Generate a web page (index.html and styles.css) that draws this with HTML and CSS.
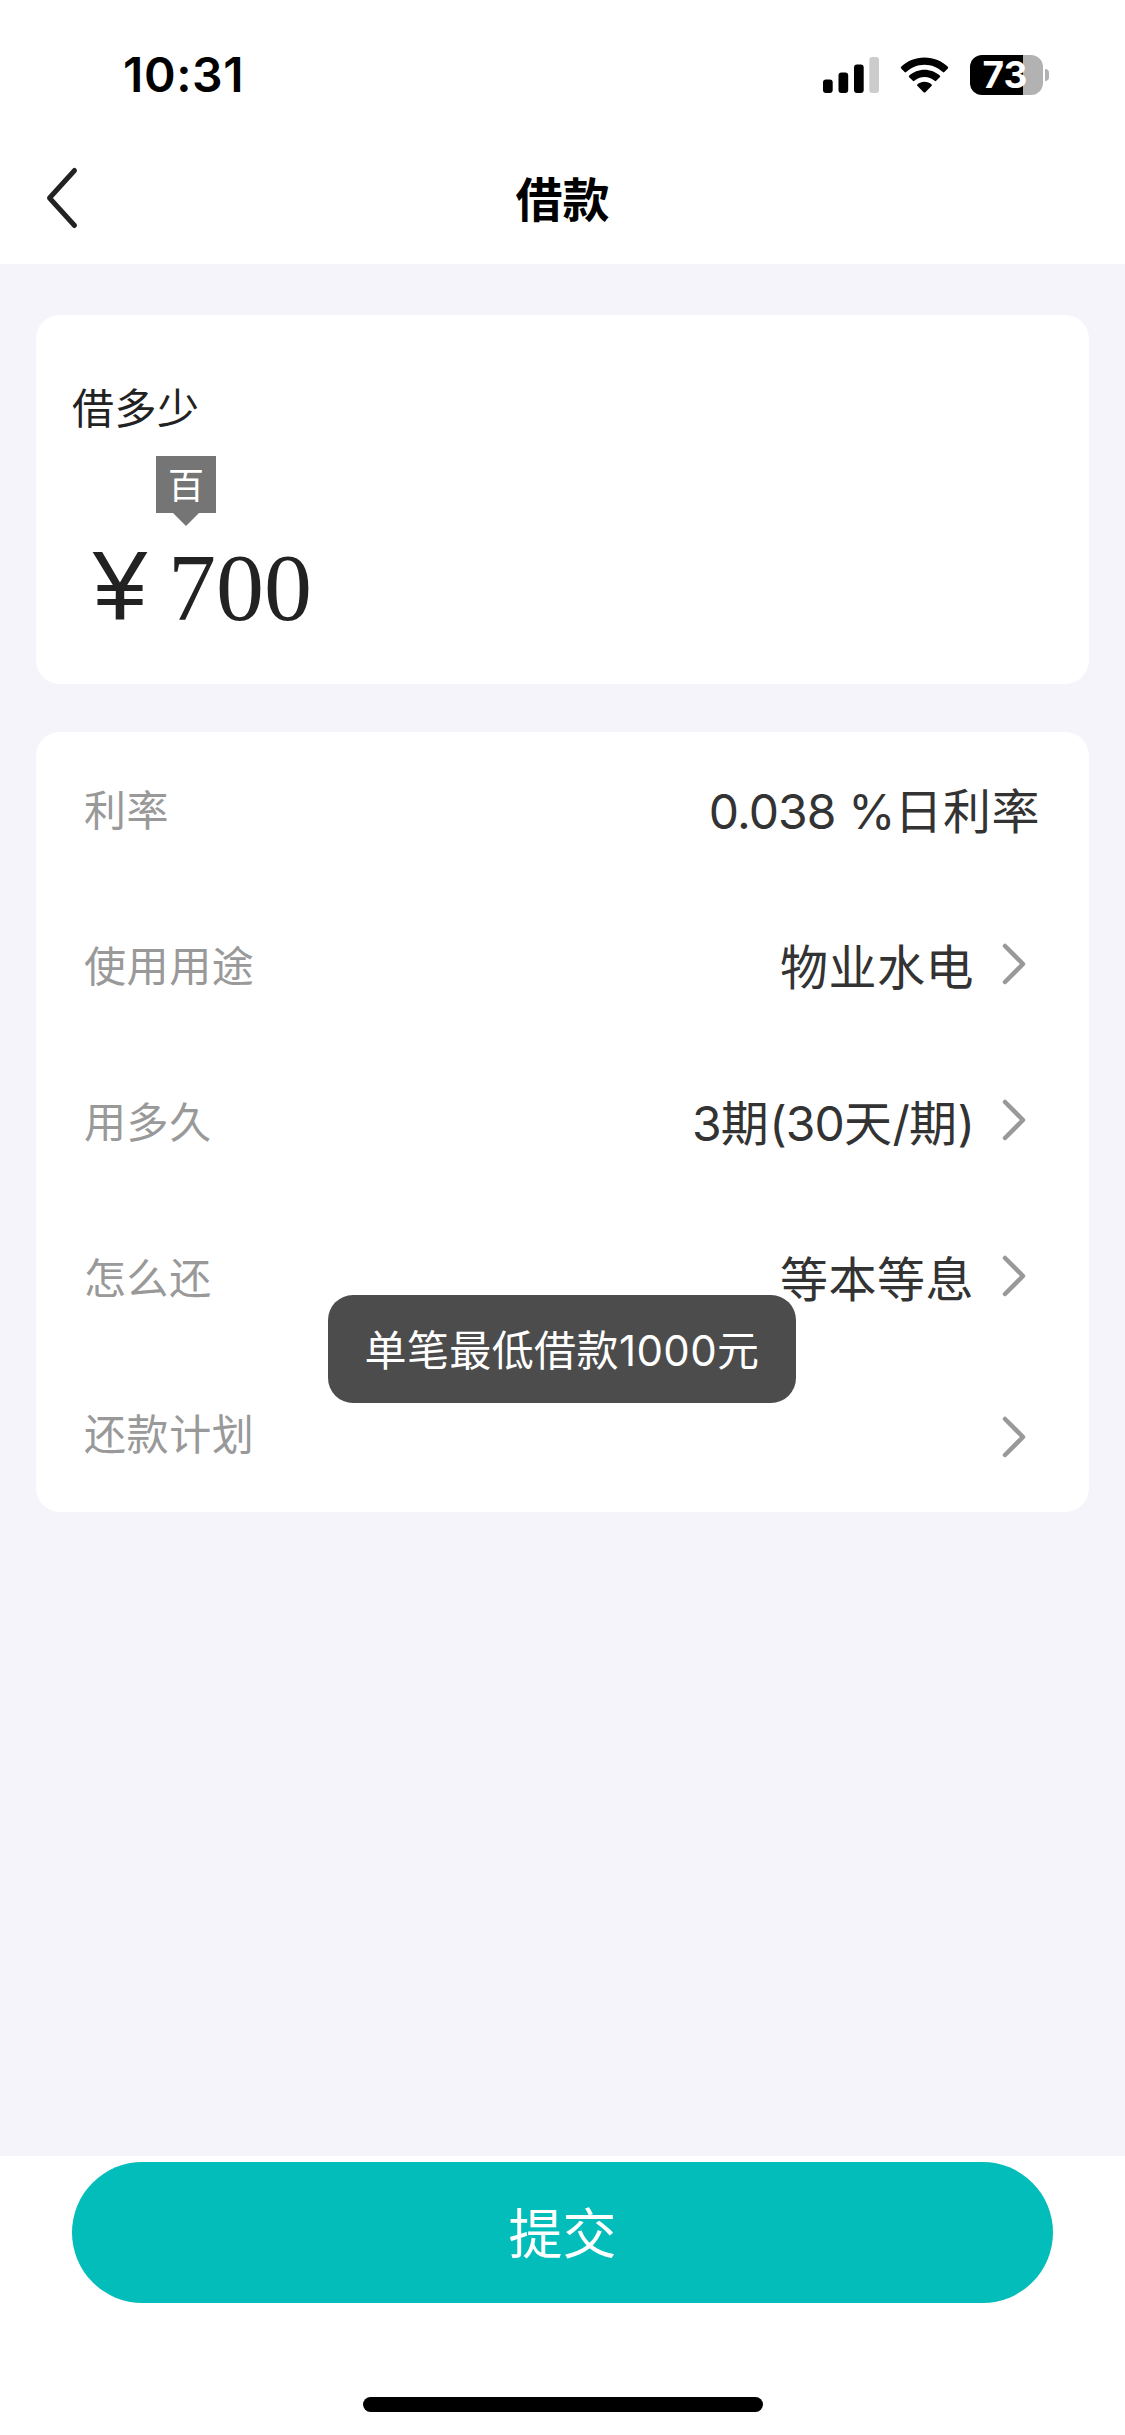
FILE: index.html
```html
<!DOCTYPE html>
<html lang="zh-CN">
<head>
<meta charset="utf-8">
<title>借款</title>
<link rel="stylesheet" href="styles.css">
</head>
<body>
<div class="screen">
  <header class="top">
    <div class="status">
      <span class="time">10:31</span>
      <div class="status-icons">
        <svg class="signal" width="56" height="36" viewBox="0 0 56 36">
          <rect x="0" y="22.500" width="9.700" height="13.500" rx="3"/>
          <rect x="15.500" y="15.500" width="9.700" height="20.500" rx="3"/>
          <rect x="31" y="7.500" width="9.700" height="28.500" rx="3"/>
          <rect x="46.300" y="0" width="9.700" height="36" rx="3" fill="#ccc"/>
        </svg>
        <svg class="wifi" width="49" height="36" viewBox="0 0 50 37">
          <path d="M25 0.5C34.5 .5 43 4.200 49 10.100Q49.800 11 49 11.900L45.400 15.500Q44.600 16.200 43.800 15.500C38.800 10.800 32.200 8 25 8S11.200 10.800 6.200 15.500Q5.400 16.200 4.600 15.500L1 11.900Q.2 11 1 10.100C7 4.200 15.500 .5 25 .5Z"/>
          <path d="M25 13C31 13 36.600 15.300 40.700 19.100Q41.600 20 40.700 20.900L37 24.500Q36.200 25.200 35.400 24.500C32.600 22 29 20.500 25 20.500S17.400 22 14.600 24.500Q13.800 25.200 13 24.500L9.300 20.900Q8.400 20 9.300 19.100C13.400 15.300 19 13 25 13Z"/>
          <path d="M25 25.500C27.800 25.500 30.300 26.500 32.200 28.100Q33.100 29 32.200 29.900L25.900 36.200Q25 37 24.100 36.200L17.800 29.900Q16.900 29 17.800 28.100C19.700 26.500 22.200 25.500 25 25.500Z"/>
        </svg>
        <div class="battery">
          <div class="battery-body">73</div>
          <div class="battery-cap"></div>
        </div>
      </div>
    </div>
    <nav class="nav">
      <svg class="back" width="36" height="66" viewBox="0 0 36 66"><path d="M30.500 5.500L5.500 33L30.500 60.500" fill="none" stroke="#222" stroke-width="5" stroke-linecap="round" stroke-linejoin="round"/></svg>
      <h1 class="title">借款</h1>
    </nav>
  </header>

  <main class="content">
    <section class="card amount-card">
      <div class="amount-label">借多少</div>
      <div class="amount"><span class="yen">¥</span><span class="digits">700<span class="unit">百</span></span></div>
    </section>

    <section class="card list">
      <div class="row">
        <span class="label">利率</span>
        <span class="value plain"><span class="num">0.038 %</span>日利率</span>
      </div>
      <div class="row">
        <span class="label">使用用途</span>
        <span class="value">物业水电</span>
        <svg class="arrow" width="28" height="46" viewBox="0 0 28 46"><path d="M5 5L23 23L5 41"/></svg>
      </div>
      <div class="row">
        <span class="label">用多久</span>
        <span class="value"><span class="num">3</span>期<span class="num">(30</span>天<span class="num">/</span>期<span class="num">)</span></span>
        <svg class="arrow" width="28" height="46" viewBox="0 0 28 46"><path d="M5 5L23 23L5 41"/></svg>
      </div>
      <div class="row">
        <span class="label">怎么还</span>
        <span class="value">等本等息</span>
        <svg class="arrow" width="28" height="46" viewBox="0 0 28 46"><path d="M5 5L23 23L5 41"/></svg>
      </div>
      <div class="row">
        <span class="label">还款计划</span>
        <svg class="arrow low" width="28" height="46" viewBox="0 0 28 46"><path d="M5 5L23 23L5 41"/></svg>
      </div>
    </section>
  </main>

  <footer class="bottom">
    <button class="submit" type="button">提交</button>
    <div class="home-bar"></div>
  </footer>

  <div class="toast">单笔最低借款<span class="toast-num">1000</span>元</div>
</div>
</body>
</html>
```
FILE: styles.css
```css
* { box-sizing: border-box; }

body {
  margin: 0;
  font-family: "Noto Sans CJK SC", sans-serif;
  background: #fff;
}

.screen {
  position: relative;
  display: flex;
  flex-direction: column;
  width: 1125px;
  height: 2435px;
  overflow: hidden;
}

.top { height: 264px; background: #fff; }

.status {
  display: flex;
  align-items: center;
  justify-content: space-between;
  height: 132px;
  padding: 17px 76px 0 123px;
}

.time {
  font: 600 48px/60px Inter, sans-serif;
  letter-spacing: .6px;
  color: #000;
}

.status-icons { display: flex; align-items: center; }
.wifi { margin-left: 21px; }

.battery { display: flex; align-items: center; margin-left: 21px; }
.battery-body {
  width: 73px;
  height: 40px;
  border-radius: 12px;
  background: linear-gradient(90deg, #000 53px, #b2b2b2 53px);
  color: #fff;
  font: 700 37px/40px Inter, sans-serif;
  text-align: center;
  text-indent: -3px;
}
.battery-cap {
  width: 4px;
  height: 12px;
  margin-left: 2px;
  border-radius: 0 4px 4px 0;
  background: #b2b2b2;
}

.nav {
  display: grid;
  grid-template-columns: 200px 1fr 200px;
  align-items: center;
  height: 132px;
}
.back { margin-left: 44px; }
.title {
  margin: 0;
  padding-bottom: 3px;
  font-size: 47px;
  line-height: 69px;
  font-weight: 700;
  text-align: center;
  color: #000;
}

.content {
  display: flex;
  flex-direction: column;
  gap: 48px;
  height: 1892px;
  padding: 51px 36px 0;
  background: #f4f4fa;
}

.card { border-radius: 24px; background: #fff; }

.amount-card { height: 369px; padding: 58px 36px 0; }
.amount-label {
  font-size: 42px;
  line-height: 66px;
  letter-spacing: .5px;
  color: #222;
}
.amount {
  display: flex;
  align-items: baseline;
  margin-top: 72px;
  font-size: 96px;
  line-height: 150px;
  color: #222;
}
.yen {
  width: 96px;
  font-family: "Liberation Sans", sans-serif;
  font-size: 98px;
  text-align: center;
}
.digits { position: relative; font-family: "Liberation Serif", serif; }

.unit {
  position: absolute;
  left: -12px;
  top: -57px;
  width: 60px;
  height: 57px;
  background: #757575;
  color: #fff;
  font: 36px/54px "Noto Sans CJK SC", sans-serif;
  text-align: center;
}
.unit::after {
  content: "";
  position: absolute;
  left: 16px;
  top: 56px;
  border: 14px solid transparent;
  border-top-color: #757575;
  border-bottom: 0;
}

.row {
  display: flex;
  align-items: center;
  height: 156px;
  padding: 0 61px 0 48px;
}
.label {
  flex: 1;
  padding-bottom: 5px;
  font-size: 42px;
  letter-spacing: .6px;
  color: #999;
}
.value {
  padding-bottom: 5px;
  font-size: 48px;
  letter-spacing: .5px;
  color: #333;
}
.plain { margin-right: -12px; }
.num { font-family: Inter, sans-serif; letter-spacing: -.9px; }
.arrow {
  margin: -4px 0 0 26px;
  fill: none;
  stroke: #999;
  stroke-width: 4.5;
  stroke-linecap: round;
  stroke-linejoin: round;
}
.arrow.low { margin-top: 6px; }

.bottom {
  display: flex;
  flex-direction: column;
  align-items: center;
  flex: 1;
  padding-top: 6px;
  background: #fff;
}
.submit {
  width: 981px;
  height: 141px;
  padding: 0 0 3px;
  border: 0;
  border-radius: 71px;
  background: #02bdb9;
  color: #fff;
  font: 54px/138px "Noto Sans CJK SC", sans-serif;
}
.home-bar {
  width: 400px;
  height: 15px;
  margin-top: 94px;
  border-radius: 8px;
  background: #000;
}

.toast {
  position: absolute;
  left: 328px;
  top: 1295px;
  width: 468px;
  height: 108px;
  border-radius: 25px;
  background: #4c4c4c;
  color: #fff;
  font-size: 42px;
  line-height: 105px;
  letter-spacing: .4px;
  text-align: center;
  white-space: nowrap;
}
.toast-num { font-family: Inter, sans-serif; }
```
